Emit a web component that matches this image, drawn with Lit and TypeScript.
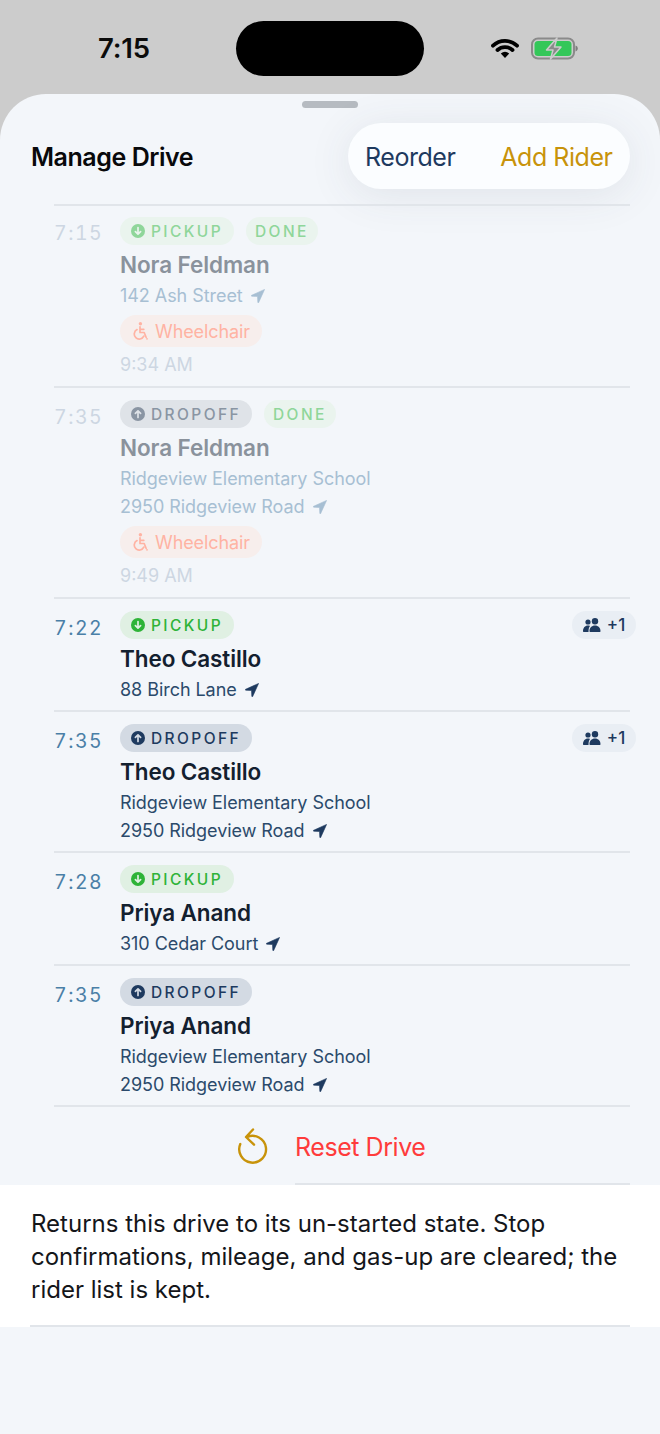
import { LitElement, html, css } from "lit";
import { customElement } from "lit/decorators.js";

type Stop = { time: string; kind: "pickup" | "dropoff"; name: string; lines: string[]; done?: string; extra?: boolean };
const stops: Stop[] = [
  { time: "7:15", kind: "pickup", name: "Nora Feldman", lines: ["142 Ash Street"], done: "9:34 AM" },
  { time: "7:35", kind: "dropoff", name: "Nora Feldman", lines: ["Ridgeview Elementary School", "2950 Ridgeview Road"], done: "9:49 AM" },
  { time: "7:22", kind: "pickup", name: "Theo Castillo", lines: ["88 Birch Lane"], extra: true },
  { time: "7:35", kind: "dropoff", name: "Theo Castillo", lines: ["Ridgeview Elementary School", "2950 Ridgeview Road"], extra: true },
  { time: "7:28", kind: "pickup", name: "Priya Anand", lines: ["310 Cedar Court"] },
  { time: "7:35", kind: "dropoff", name: "Priya Anand", lines: ["Ridgeview Elementary School", "2950 Ridgeview Road"] },
];
const heights = [182, 211, 113, 141, 113, 141];

const arrow = html`<svg class="nav" viewBox="0 0 14 14"><path d="M13.600.4.600 6.300c-.5.2-.4.900.2.900l5.700.3.300 5.700c0 .6.700.7.900.2L13.600.4Z" fill="currentColor" stroke="currentColor" stroke-width=".6" stroke-linejoin="round"/></svg>`;
const badgeIcon = (up: boolean) => html`<svg class="bi" viewBox="0 0 14 14"><circle cx="7" cy="7" r="7" fill="currentColor"/><path d="${up ? "M7 10.500V4M4.400 6.400 7 3.800l2.600 2.600" : "M7 3.500V10M4.400 7.600 7 10.200l2.600-2.600"}" fill="none" stroke="var(--badge-bg)" stroke-width="1.700" stroke-linecap="round" stroke-linejoin="round"/></svg>`;
const people = html`<svg class="people" viewBox="0 0 18 14"><circle cx="5" cy="4" r="2.600" fill="currentColor"/><circle cx="12" cy="3.300" r="3.200" fill="currentColor"/><path d="M0 13.300c0-3.400 2-5.700 5-5.700.8 0 1.400.1 2 .4-1 1.100-1.500 3-1.500 5.300 0 .3 0 .4.100.7H.6c-.4 0-.6-.3-.6-.7ZM6.500 13.300c0-3.600 2.200-5.800 5.500-5.800s5.500 2.200 5.500 5.800c0 .4-.2.700-.6.7H7.100c-.4 0-.6-.3-.6-.7Z" fill="currentColor"/></svg>`;
const wheelchair = html`<svg class="wc" viewBox="0 0 16 18"><circle cx="8.400" cy="1.800" r="1.700" fill="currentColor"/><path d="M8 4.800v5.700h4.200l1.900 4.800M8 7.300h3.800M5 7.600a5 5 0 1 0 6.800 6.600" fill="none" stroke="currentColor" stroke-width="1.700" stroke-linecap="round" stroke-linejoin="round"/><circle cx="15" cy="16.800" r=".9" fill="currentColor"/></svg>`;

@customElement("app-root")
export class AppRoot extends LitElement {
  static styles = css`
    :host { display: block; min-height: 1434px; background: #ccc; font-family: Inter, "Liberation Sans", sans-serif; color: #14233a; }
    .status { height: 94px; display: grid; grid-template-columns: 236px 188px 1fr; align-items: start; }
    .clock { font-size: 27.500px; font-weight: 600; color: #0b0b0b; padding: 32px 0 0 98px; line-height: 33px; letter-spacing: -0.2px; }
    .island { width: 188px; height: 55px; margin-top: 21px; background: #000; border-radius: 28px; }
    .sys { display: flex; align-items: flex-start; gap: 12px; padding: 37px 0 0 67px; }
    .wifi { width: 28px; height: 21px; }
    .batt { width: 47px; height: 23px; }
    .sheet { background: #f3f6fa; border-radius: 46px 46px 0 0; min-height: 1340px; display: flex; flex-direction: column; overflow: hidden; }
    .handle { width: 56px; height: 7px; border-radius: 4px; background: #b6bbc1; margin: 7px auto 0; }
    .head { display: flex; align-items: center; justify-content: space-between; padding: 15px 30px 15px 31px; height: 66px; }
    .title { font-size: 25px; font-weight: 600; color: #08090b; letter-spacing: -0.45px; padding-top: 1px; }
    .pill { width: 282px; height: 66px; box-sizing: border-box; padding: 1px 17.500px 0 17px; border-radius: 33px; background: #fbfdff; display: flex; align-items: center; justify-content: space-between; font-size: 25px; box-shadow: 0 6px 44px rgba(60, 70, 90, 0.1); letter-spacing: -0.46px; }
    .reorder { color: #1e3a5f; }
    .add { color: #c8930a; }
    .list { margin: 0 30px 0 54px; }
    .row { display: flex; border-top: 2px solid #e1e5ea; height: var(--h); box-sizing: border-box; padding-top: 12px; }
    .row:first-child { padding-top: 11px; }
    .time { width: 66px; flex: none; font-size: 19.500px; color: #4a7fa7; letter-spacing: 1.500px; line-height: 28px; margin-top: 2.500px; font-feature-settings: "tnum"; }
    .row:first-child .time { margin-top: 2px; }
    .body { flex: 1; min-width: 0; }
    .tags { display: flex; align-items: center; gap: 12px; height: 28px; }
    .badge { --badge-bg: #e0f0e3; height: 28px; display: inline-flex; align-items: center; gap: 6px; padding: 0 11px; border-radius: 14px; background: var(--badge-bg); color: #2eb338; font-size: 15.500px; font-weight: 500; letter-spacing: 2.400px; }
    .badge.dropoff { --badge-bg: #d3dae3; color: #1e3a5f; }
    .badge.donetag { padding: 0 9px; }
    .bi { width: 14px; height: 14px; }
    .extra { margin-left: auto; margin-right: -6px; height: 28px; width: 64px; box-sizing: border-box; display: inline-flex; align-items: center; justify-content: center; gap: 6px; background: #e9eef4; border-radius: 14px; font-size: 17px; font-weight: 500; color: #1e3a5f; }
    .people { width: 18px; height: 14px; }
    .name { font-size: 22.500px; font-weight: 600; line-height: 28px; margin-top: 6px; margin-bottom: 3px; color: #13202f; letter-spacing: -0.1px; }
    .addr { font-size: 18px; line-height: 28px; color: #2b4a6b; display: flex; align-items: center; gap: 8px; letter-spacing: -0.05px; }
    .nav { width: 14px; height: 14px; color: #1e3a5f; }
    .need { display: inline-flex; align-items: center; gap: 7px; height: 32px; padding: 0 12px 0 12px; margin-top: 5px; background: #f7eeec; border-radius: 16px; color: #ffb3a3; font-size: 18px; letter-spacing: -0.1px; vertical-align: top; }
    .wc { width: 16px; height: 18px; }
    .at { font-size: 18px; line-height: 22px; margin-top: 7px; color: #cdd6e2; }
    .done .time { color: #cdd6e2; }
    .done .name { color: #8a929c; }
    .done .addr, .done .nav { color: #a7bfd3; }
    .done .badge { --badge-bg: #eaf4ee; color: #8fd69a; }
    .done .badge.dropoff { --badge-bg: #dfe3e8; color: #8a95a3; }
    .reset { height: 80px; margin: 0 30px 0 54px; border-top: 2px solid #e1e5ea; box-sizing: border-box; display: flex; align-items: center; }
    .reset svg { width: 32px; height: 36px; margin-left: 183px; }
    .reset span { font-size: 25px; color: #ff3b3b; margin-left: 26px; padding-top: 1px; letter-spacing: -0.45px; }
    .resetline { height: 2px; margin: -2px 30px 0 295px; background: #e1e5ea; position: relative; }
    .info { background: #fff; padding: 22px 30px 19px 31px; font-size: 24px; line-height: 33px; color: #14161a; }
    .infoline { height: 2px; background: #e1e5ea; margin: 0 30px; }
    .white { background: #fff; }
  `;

  render() {
    return html`
      <div class="status">
        <div class="clock">7:15</div>
        <div class="island"></div>
        <div class="sys">
          <svg class="wifi" viewBox="0 0 28 21"><path d="M2 8.700a17.500 17.500 0 0 1 24 0M6.500 13a11 11 0 0 1 15 0" fill="none" stroke="#000" stroke-width="3.800" stroke-linecap="round"/><path d="M9.800 16.600a6.500 6.500 0 0 1 8.400 0L14 21Z" fill="#000"/></svg>
          <svg class="batt" viewBox="0 0 47 23">
            <rect x="1" y="1.500" width="42" height="20" rx="6" fill="none" stroke="#8a8a8a" stroke-width="2"/>
            <rect x="3.500" y="4" width="37" height="15" rx="3.500" fill="#34c759"/>
            <path d="M44.500 8.500v6c1.400-.4 2.300-1.600 2.300-3s-.9-2.600-2.300-3Z" fill="#7d7d7d"/>
            <path d="M26 1 15.500 13h6.500L19.500 22 30 10h-6.500Z" fill="#8a8a8a" stroke="#ccc" stroke-width="1.500" stroke-linejoin="round"/>
          </svg>
        </div>
      </div>
      <div class="sheet">
        <div class="handle"></div>
        <div class="head">
          <div class="title">Manage Drive</div>
          <div class="pill"><span class="reorder">Reorder</span><span class="add">Add Rider</span></div>
        </div>
        <div class="list">
          ${stops.map((s, i) => html`
            <div class="row ${s.done ? "done" : ""}" style="--h:${heights[i]}px">
              <div class="time">${s.time}</div>
              <div class="body">
                <div class="tags">
                  <span class="badge ${s.kind}">${badgeIcon(s.kind === "dropoff")}${s.kind.toUpperCase()}</span>
                  ${s.done ? html`<span class="badge donetag">DONE</span>` : ""}
                  ${s.extra ? html`<span class="extra">${people}+1</span>` : ""}
                </div>
                <div class="name">${s.name}</div>
                ${s.lines.map((l, j) => html`<div class="addr">${l}${j === s.lines.length - 1 ? arrow : ""}</div>`)}
                ${s.done ? html`<span class="need">${wheelchair}Wheelchair</span><div class="at">${s.done}</div>` : ""}
              </div>
            </div>`)}
        </div>
        <div class="reset">
          <svg viewBox="0 0 32 36" fill="none" stroke="#c8930a" stroke-width="2.400" stroke-linecap="round" stroke-linejoin="round"><path d="M10 9.100A13.400 13.400 0 1 1 3.300 16M16 1.500 9 9l8 7.700"/></svg>
          <span>Reset Drive</span>
        </div>
        <div class="resetline"></div>
        <div class="info">Returns this drive to its un-started state. Stop confirmations, mileage, and gas-up are cleared; the rider list is kept.</div>
        <div class="white"><div class="infoline"></div></div>
      </div>
    `;
  }
}
